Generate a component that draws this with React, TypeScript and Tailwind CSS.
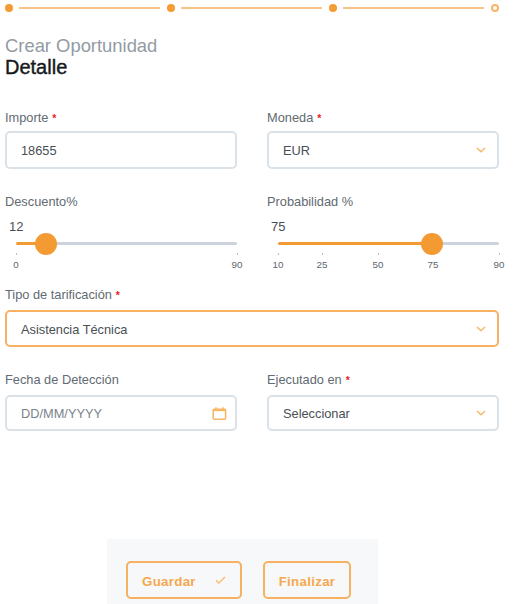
import React from "react";

function Chevron() {
  return (
    <svg width="10" height="6" viewBox="0 0 10 6" fill="none" stroke="#f9b76c" strokeWidth="1.5">
      <path d="M1 1l4 3.8L9 1" />
    </svg>
  );
}

function CalendarIcon() {
  return (
    <svg width="15" height="13" viewBox="0 0 15 13" fill="none" stroke="#f8b565" strokeWidth="1.5">
      <rect x="1.2" y="2.2" width="12.4" height="10" rx="1" />
      <path d="M1.2 3.2h12.4" strokeWidth="2" />
      <path d="M4 0.3v3M10.8 0.3v3" />
    </svg>
  );
}

function Label({ children, required }: { children: React.ReactNode; required?: boolean }) {
  return (
    <div className="h-4 whitespace-nowrap text-[12.8px] leading-4 text-[#626a72]">
      {children}
      {required && <span className="pl-px text-[10.5px] font-bold text-[#ee1c25]"> *</span>}
    </div>
  );
}

type FieldProps = {
  label: string;
  required?: boolean;
  value: string;
  box: string;
  text?: string;
  icon?: React.ReactNode;
};

function Field({ label, required, value, box, text = "text-[#494e54]", icon }: FieldProps) {
  return (
    <div>
      <Label required={required}>{label}</Label>
      <div className={"flex items-center justify-between rounded-[5px] border-2 pl-[14px] " + box}>
        <span className={"pt-[2px] text-[12.8px] leading-4 " + text}>{value}</span>
        {icon}
      </div>
    </div>
  );
}

type SliderProps = { label: string; value: number; fill: string; marks: number[]; columns: string };

function Slider({ label, value, fill, marks, columns }: SliderProps) {
  return (
    <div>
      <Label>{label}</Label>
      <div className="mt-[9px] pl-[4px] text-[13px] leading-4 text-[#494e54]">{value}</div>
      <div className="-mt-[3px] ml-[11px] flex h-[23px] items-center">
        <div className={"h-[3px] rounded-l bg-[#f39a33] " + fill} />
        <div className="z-10 -mx-[11px] size-[22px] shrink-0 rounded-full bg-[#f39a33]" />
        <div className="h-[3px] flex-1 rounded-r bg-[#cbd3dc]" />
      </div>
      <div className={"-mt-[2px] ml-[11px] grid " + columns}>
        {marks.map((mark) => (
          <div key={mark} className="flex w-0 flex-col items-center">
            <span className="h-[2px] w-px bg-[#b5bdc5]" />
            <span className="mt-[4px] text-[9.8px] leading-3 text-[#60676e]">{mark}</span>
          </div>
        ))}
      </div>
    </div>
  );
}

function Stepper() {
  return (
    <div className="flex h-[15px] w-[494px] items-center pl-[5px]">
      {[0, 1, 2].map((step) => (
        <React.Fragment key={step}>
          <span className="size-[8px] shrink-0 rounded-full bg-[#f39a33]" />
          <span className="ml-[6px] mr-[7px] mt-px h-[2px] flex-1 bg-[#f8c388]" />
        </React.Fragment>
      ))}
      <span className="-mr-[5px] size-[8px] shrink-0 rounded-full border-2 border-[#f8b467]" />
    </div>
  );
}

export default function App() {
  return (
    <div className="h-[604px] w-[513px] overflow-hidden bg-white font-['Liberation_Sans',Arial,sans-serif]">
      <Stepper />
      <h1 className="mt-[21px] pl-[5px]">
        <span className="block text-[18.4px] leading-5 text-[#939ba3]">Crear Oportunidad</span>
        <span className="block text-[20px] leading-[22px] text-[#16191c] [-webkit-text-stroke:0.4px_#16191c]">
          Detalle
        </span>
      </h1>
      <form className="ml-[5px] mt-[32px] w-[494px]">
        <div className="grid h-[84px] grid-cols-2 gap-x-[30px]">
          <Field label="Importe" required value="18655" box="mt-[5px] h-[38px] border-[#dae1e7]" />
          <Field label="Moneda" required value="EUR" box="mt-[5px] h-[38px] border-[#dae1e7] pr-[11px]" icon={<Chevron />} />
        </div>
        <div className="grid h-[93px] grid-cols-2 gap-x-[30px]">
          <Slider label="Descuento%" value={12} fill="w-[30px]" marks={[0, 90]} columns="grid-cols-[221px_0px]" />
          <Slider
            label="Probabilidad %"
            value={75}
            fill="w-[154px]"
            marks={[10, 25, 50, 75, 90]}
            columns="grid-cols-[44px_56px_55px_66px_0px]"
          />
        </div>
        <div className="h-[85px]">
          <Field
            label="Tipo de tarificación"
            required
            value="Asistencia Técnica"
            box="mt-[7px] h-[37px] border-[#f8b163] pr-[11px]"
            icon={<Chevron />}
          />
        </div>
        <div className="grid h-[167px] grid-cols-2 gap-x-[30px]">
          <Field
            label="Fecha de Detección"
            value="DD/MM/YYYY"
            text="text-[#7b838b]"
            box="mt-[7px] h-[36px] border-[#dae1e7] pr-[8px]"
            icon={<CalendarIcon />}
          />
          <Field label="Ejecutado en" required value="Seleccionar" box="mt-[7px] h-[36px] border-[#dae1e7] pr-[11px]" icon={<Chevron />} />
        </div>
      </form>
      <div className="ml-[107px] flex h-[65px] w-[271px] gap-[22px] bg-[#f7f8fa] pl-[19px] pt-[22px] font-['Liberation_Sans',sans-serif] text-[13.3px] font-bold tracking-[0.3px] text-[#f5a84e]">
        <button className="flex h-[38px] w-[116px] items-center justify-between rounded-[5px] border-2 border-[#f7b162] pl-[14px] pr-[14px]">
          <span className="pt-[3px]">Guardar</span>
          <svg width="11" height="8" viewBox="0 0 11 8" fill="none" stroke="#f8bb76" strokeWidth="1.4">
            <path d="M1 4.2l2.8 2.8L10 1" />
          </svg>
        </button>
        <button className="-ml-px flex h-[38px] w-[88px] items-center justify-center rounded-[5px] border-2 border-[#f7b162]">
          <span className="pt-[3px]">Finalizar</span>
        </button>
      </div>
    </div>
  );
}
